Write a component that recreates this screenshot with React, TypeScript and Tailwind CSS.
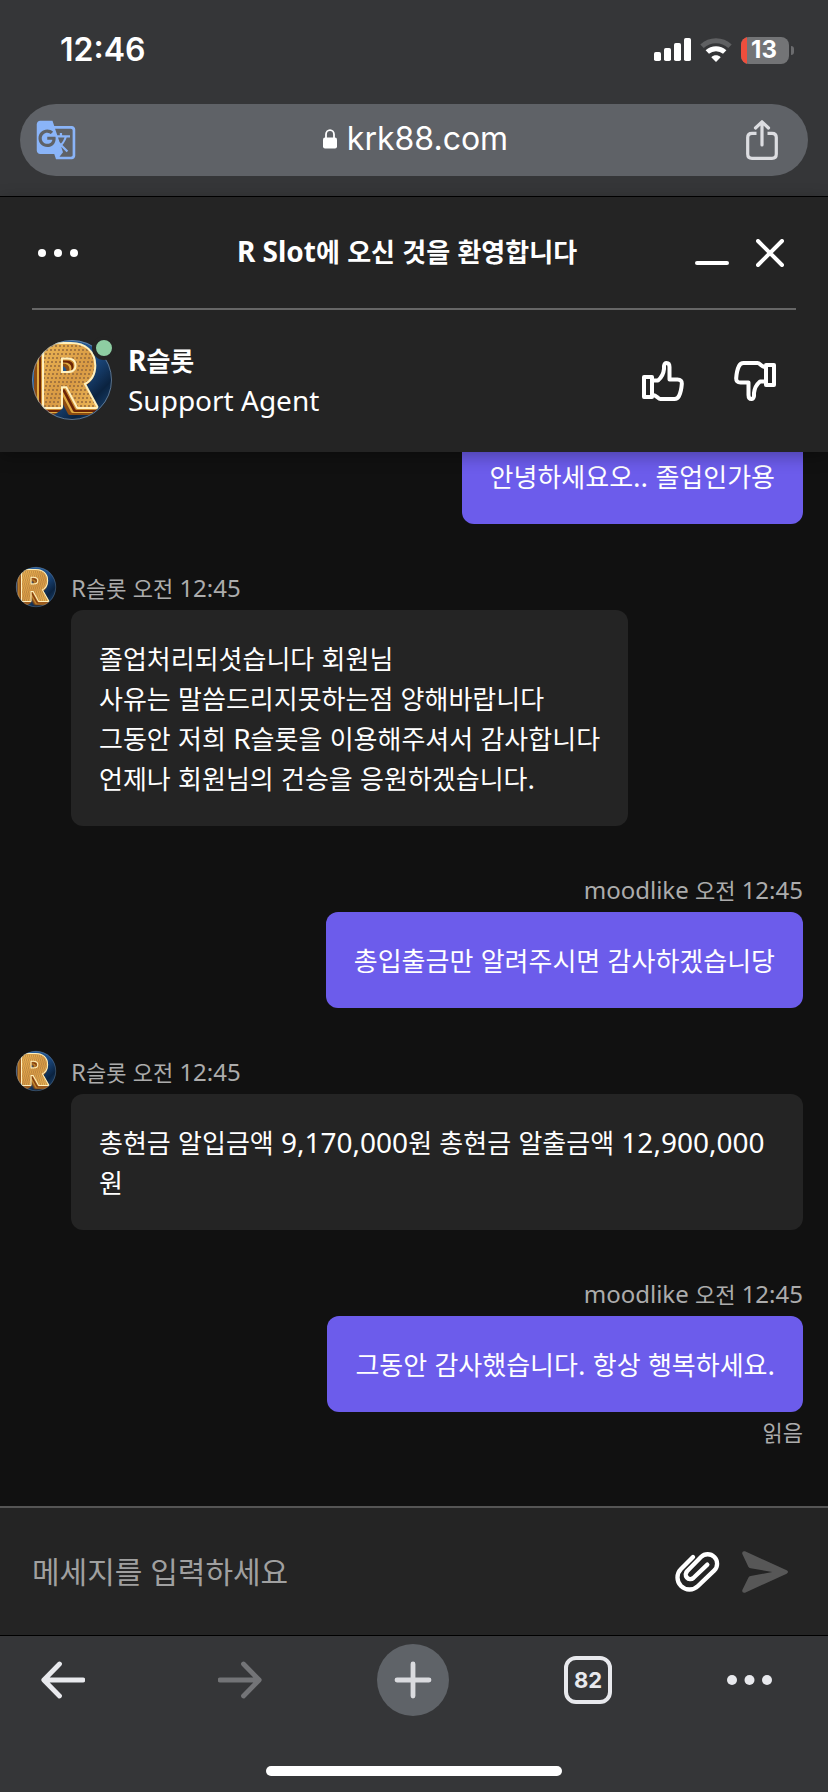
import { useId } from "react";
import type { ReactNode } from "react";
import { MdGTranslate } from "react-icons/md";

const SANS = "font-['Noto_Sans','Noto_Sans_CJK_KR',sans-serif]";

/** Hangul runs are set slightly smaller than the Latin text and spaces around them. */
function Mixed({ text, hangul }: { text: string; hangul: string }) {
  const parts = text.split(/([가-힣]+)/);
  return (
    <>
      {parts.map((part, i) =>
        i % 2 ? (
          <span key={i} className={hangul}>
            {part}
          </span>
        ) : (
          part
        ),
      )}
    </>
  );
}

function Avatar({ className }: { className: string }) {
  const id = useId();
  const bg = `${id}-bg`;
  const face = `${id}-face`;
  const gold = `${id}-gold`;
  const clip = `${id}-clip`;
  return (
    <svg viewBox="0 0 80 80" className={`${className} overflow-visible`} aria-hidden="true">
      <defs>
        <linearGradient id={bg} x1="0" y1="0" x2="1" y2="1">
          <stop offset="0" stopColor="#2f69a8" />
          <stop offset="0.5" stopColor="#1d4d86" />
          <stop offset="0.75" stopColor="#0b2340" />
          <stop offset="1" stopColor="#1f5288" />
        </linearGradient>
        <linearGradient id={gold} x1="0" y1="0" x2="1" y2="1">
          <stop offset="0" stopColor="#f0bb58" />
          <stop offset="0.5" stopColor="#d89a44" />
          <stop offset="1" stopColor="#f5c560" />
        </linearGradient>
        <pattern id={face} width="80" height="80" patternUnits="userSpaceOnUse">
          <rect width="80" height="80" fill={`url(#${gold})`} />
          {Array.from({ length: 20 }, (_, i) => (
            <path
              key={i}
              d={`M0 ${i * 4 + 2}H80`}
              stroke="#94683a"
              strokeWidth="1.6"
              strokeDasharray="2 2"
              strokeDashoffset={i}
            />
          ))}
        </pattern>
        <clipPath id={clip}>
          <circle cx="40" cy="40" r="40" />
        </clipPath>
      </defs>
      <circle cx="40" cy="40" r="40" fill={`url(#${bg})`} />
      <g clipPath={`url(#${clip})`}>
        <text
          x="8"
          y="67"
          fill={`url(#${face})`}
          stroke="#fff0bd"
          strokeWidth="4"
          strokeLinejoin="round"
          className="font-[Inter,sans-serif] text-[86px] font-black [filter:drop-shadow(-1px_1px_0_#c98a30)_drop-shadow(-2px_2px_0_#6b2406)_drop-shadow(-2px_1px_0_#e0aa40)_drop-shadow(-3px_2px_0_#8a4a12)] [paint-order:stroke]"
        >
          R
        </text>
      </g>
      <circle cx="40" cy="40" r="39.5" fill="none" stroke="#8fa3b5" strokeOpacity="0.6" />
    </svg>
  );
}

function ThumbIcon({ down = false }: { down?: boolean }) {
  return (
    <svg
      viewBox="0 0 42 40"
      className={down ? "h-10 w-[42px] rotate-180" : "h-10 w-[42px]"}
      fill="none"
      stroke="currentColor"
      strokeWidth="4"
      strokeLinejoin="round"
    >
      <rect x="2" y="16" width="8" height="20" />
      <path d="M11 19.5H16C19.5 16.5 21.5 13 22 8V5C22.3 3 23 2 24.5 2C26.5 2 27.5 3.5 27.5 6V18.5H35.5C38.5 18.5 40 20 39.8 23C39.5 27 38.5 32 37 35C36 37 34.5 38 32.5 38H18.5C16 38 14.5 34 11 34" />
    </svg>
  );
}

function Meta({ text }: { text: string }) {
  return (
    <p className="h-11 text-2xl leading-[44px] text-[#acacac]">
      <Mixed text={text} hangul="text-[22px] leading-none" />
    </p>
  );
}

function Line({ text }: { text: string }) {
  return (
    <p>
      <Mixed text={text} hangul="text-[26px] leading-none" />
    </p>
  );
}

function AgentMessage({ meta, children }: { meta: string; children: ReactNode }) {
  return (
    <article className="grid grid-cols-[55px_minmax(0,1fr)]">
      <div className="pt-px">
        <Avatar className="size-10" />
      </div>
      <div className="flex flex-col items-start">
        <Meta text={meta} />
        <div className="rounded-xl bg-[#242424] p-7 text-[28px] leading-10 break-all">{children}</div>
      </div>
    </article>
  );
}

function VisitorMessage({ meta, text, status }: { meta?: string; text: string; status?: string }) {
  return (
    <article className="flex flex-col items-end">
      {meta && <Meta text={meta} />}
      <div className="rounded-xl bg-[#6c5ceb] p-7 text-[28px] leading-10">
        <Line text={text} />
      </div>
      {status && <p className="text-[22px] leading-10 text-[#acacac]">{status}</p>}
    </article>
  );
}

function Dots({ r, gap }: { r: number; gap: number }) {
  const w = 2 * (gap + r);
  return (
    <svg viewBox={`0 0 ${w} ${2 * r}`} width={w} height={2 * r} fill="currentColor">
      <circle cx={r} cy={r} r={r} />
      <circle cx={r + gap} cy={r} r={r} />
      <circle cx={r + 2 * gap} cy={r} r={r} />
    </svg>
  );
}

function StatusBar() {
  return (
    <div className="flex h-[104px] items-center justify-between pr-[34px] pb-1 pl-[60px]">
      <time className="text-[32px] font-semibold text-white">12:46</time>
      <div className="flex items-center gap-[9px]">
        <svg viewBox="0 0 37 24" className="h-6 w-[37px]" fill="#fff">
          <rect x="0" y="14" width="7" height="9" rx="1.8" />
          <rect x="10" y="10" width="7" height="13" rx="1.8" />
          <rect x="20" y="5" width="7" height="18" rx="1.8" />
          <rect x="30" y="0" width="7" height="23" rx="1.8" />
        </svg>
        <svg viewBox="0 0 32 24" className="h-6 w-8" fill="none">
          <path d="M2 8.3C10 0.8 22 0.8 30 8.3" stroke="#5f6062" strokeWidth="5" />
          <path d="M7.3 14C12.3 9.5 19.7 9.5 24.7 14" stroke="#fff" strokeWidth="5" />
          <path d="M16 24L11.3 19.2C14 16.7 18 16.7 20.7 19.2Z" fill="#fff" />
        </svg>
        <div className="flex items-center gap-0.5">
          <div className="flex h-[27px] w-12 items-center overflow-hidden rounded-lg bg-[#737476]">
            <span className="h-full w-1.5 bg-[#ee4e3c]" />
            <span className="w-[34px] text-center text-2xl leading-none font-bold text-white">13</span>
          </div>
          <span className="h-[9px] w-[3px] rounded-r-full bg-[#6b6c6e]" />
        </div>
      </div>
    </div>
  );
}

function AddressBar() {
  return (
    <div className="mx-5 mb-5 grid h-[72px] grid-cols-[1fr_auto_1fr] items-center rounded-full bg-[#5f6267] pr-[30px] pl-[15px]">
      <button type="button" aria-label="Translate" className="justify-self-start text-[#8ab4f8]">
        <MdGTranslate className="size-[42px]" />
      </button>
      <a
        href="https://krk88.com"
        className="ml-[18px] flex items-center gap-2.5 pb-0.5 text-[32px] leading-none text-white"
      >
        <svg viewBox="0 0 14 20" className="h-5 w-3.5">
          <path d="M3 9V5.5A4 4.3 0 0 1 11 5.5V9" fill="none" stroke="#fff" strokeWidth="1.8" />
          <rect x="0" y="8.5" width="14" height="11" rx="2" fill="#fff" />
        </svg>
        krk88.com
      </a>
      <button type="button" aria-label="Share" className="justify-self-end text-[#dcdde1]">
        <svg
          viewBox="0 0 32 40"
          className="h-10 w-8"
          fill="none"
          stroke="currentColor"
          strokeWidth="3.2"
          strokeLinejoin="round"
        >
          <path d="M10.5 13.3H6Q1.7 13.3 1.7 17.5V34Q1.7 38.3 6 38.3H26Q30.3 38.3 30.3 34V17.5Q30.3 13.3 26 13.3H21.5" />
          <path d="M16 25V2M9.5 8L16 1.8L22.5 8" strokeLinecap="round" />
        </svg>
      </button>
    </div>
  );
}

function ChatHeader() {
  return (
    <header className="relative z-10 bg-[#242424] px-8 text-white shadow-[0_4px_16px_rgba(0,0,0,0.3)]">
      <div className="grid h-[113px] grid-cols-[96px_1fr_110px] items-center border-b-2 border-[#666666]">
        <button type="button" aria-label="메뉴" className="flex h-12 w-[60px] items-center pl-1.5">
          <Dots r={4} gap={16} />
        </button>
        <h1 className="pb-1 text-center text-[28px] leading-10 font-bold whitespace-nowrap">
          <Mixed text="R Slot에 오신 것을 환영합니다" hangul="text-[26px] leading-none" />
        </h1>
        <div className="flex items-center justify-end gap-[27px] pr-3">
          <button type="button" aria-label="최소화" className="flex h-7 w-[34px] items-end pb-0.5">
            <span className="h-1 w-full rounded-full bg-white" />
          </button>
          <button type="button" aria-label="닫기">
            <svg viewBox="0 0 28 28" className="size-7" stroke="#fff" strokeWidth="4" strokeLinecap="round">
              <path d="M2 2L26 26M26 2L2 26" />
            </svg>
          </button>
        </div>
      </div>
      <div className="flex items-center pt-[30px] pb-8">
        <div className="relative size-20">
          <Avatar className="size-20" />
          <span className="absolute -top-1 -right-1 size-6 rounded-full border-4 border-[#242424] bg-[#8ecda2]" />
        </div>
        <div className="ml-4 flex-1 text-[28px] leading-10">
          <p className="font-bold">
            <Mixed text="R슬롯" hangul="text-[26px] leading-none" />
          </p>
          <p>Support Agent</p>
        </div>
        <div className="flex gap-[50px] pt-0.5 pr-5">
          <button type="button" aria-label="좋아요">
            <ThumbIcon />
          </button>
          <button type="button" aria-label="싫어요">
            <ThumbIcon down />
          </button>
        </div>
      </div>
    </header>
  );
}

function Composer() {
  return (
    <form
      className="flex h-[129px] items-center border-t-2 border-[#555555] bg-[#242424] pr-10 pl-8"
      onSubmit={(e) => e.preventDefault()}
    >
      <input
        type="text"
        aria-label="메세지를 입력하세요"
        placeholder="메세지를 입력하세요"
        className="h-16 min-w-0 flex-1 bg-transparent text-[30px] text-white outline-none placeholder:text-[#a0a0a0]"
      />
      <button type="button" aria-label="파일 첨부" className="text-white">
        <svg
          viewBox="0 0 138 120"
          className="h-10 w-[46px]"
          fill="none"
          stroke="currentColor"
          strokeWidth="13"
          strokeLinecap="round"
        >
          <path d="M57 15L21 51A36 36 0 0 0 72 102L121 55A28 28 0 0 0 81 15L40 57A13 13 0 0 0 58 78L100 38" />
        </svg>
      </button>
      <button type="submit" aria-label="보내기" className="ml-[22px] text-[#575757]">
        <svg viewBox="0 0 138 126" className="h-[42px] w-[46px]" fill="currentColor">
          <path d="M9 1L134 58Q142 63 134 68L9 125Q-1 127 1 117L19 80Q21 76 26 75L91 63L26 52Q21 51 19 47L1 9Q-1 -1 9 1Z" />
        </svg>
      </button>
    </form>
  );
}

function BottomBar() {
  return (
    <nav className="border-t border-black bg-[#353638] font-[Inter,sans-serif]">
      <div className="flex h-[88px] items-center justify-between pr-14 pl-[41px] text-[#e8e9ed]">
        <button type="button" aria-label="Back" className="w-[62px]">
          <svg
            viewBox="0 0 44 38"
            className="h-[38px] w-11"
            fill="none"
            stroke="currentColor"
            strokeWidth="4.8"
            strokeLinecap="round"
            strokeLinejoin="round"
          >
            <path d="M42 19H3M18.5 3L2.8 19L18.5 35" />
          </svg>
        </button>
        <button type="button" aria-label="Forward" className="text-[#737477]" disabled>
          <svg
            viewBox="0 0 44 38"
            className="h-[38px] w-11"
            fill="none"
            stroke="currentColor"
            strokeWidth="4.8"
            strokeLinecap="round"
            strokeLinejoin="round"
          >
            <path d="M2 19H41M25.5 3L41.2 19L25.5 35" />
          </svg>
        </button>
        <button
          type="button"
          aria-label="New tab"
          className="flex size-[72px] items-center justify-center rounded-full bg-[#5f6368] text-[#dadbdf]"
        >
          <svg
            viewBox="0 0 38 38"
            className="size-[38px]"
            stroke="currentColor"
            strokeWidth="4.8"
            strokeLinecap="round"
          >
            <path d="M3 19H35M19 3V35" />
          </svg>
        </button>
        <button
          type="button"
          aria-label="Tabs"
          className="flex size-12 items-center justify-center rounded-xl border-4 border-current text-[22px] leading-none font-bold"
        >
          82
        </button>
        <button type="button" aria-label="More">
          <Dots r={5} gap={17.5} />
        </button>
      </div>
      <div className="flex justify-center pt-[42px] pb-4">
        <span className="h-2.5 w-[296px] rounded-full bg-white" />
      </div>
    </nav>
  );
}

export default function App() {
  return (
    <div className="flex h-screen flex-col bg-[#111111]">
      <div className="border-b border-black bg-[#353638] font-[Inter,sans-serif]">
        <StatusBar />
        <AddressBar />
      </div>
      <section className={`flex min-h-0 flex-1 flex-col ${SANS}`}>
        <ChatHeader />
        <main className="flex min-h-0 flex-1 flex-col justify-end overflow-hidden bg-[#111111] text-white">
          <div className="flex flex-col gap-[42px] pr-[25px] pb-[54px] pl-4">
            <VisitorMessage text="안녕하세요오.. 졸업인가용" />
            <AgentMessage meta="R슬롯 오전 12:45">
              <Line text="졸업처리되셧습니다 회원님" />
              <Line text="사유는 말씀드리지못하는점 양해바랍니다" />
              <Line text="그동안 저희 R슬롯을 이용해주셔서 감사합니다" />
              <Line text="언제나 회원님의 건승을 응원하겠습니다." />
            </AgentMessage>
            <VisitorMessage meta="moodlike 오전 12:45" text="총입출금만 알려주시면 감사하겠습니당" />
            <AgentMessage meta="R슬롯 오전 12:45">
              <Line text="총현금 알입금액 9,170,000원 총현금 알출금액 12,900,000원" />
            </AgentMessage>
            <VisitorMessage
              meta="moodlike 오전 12:45"
              text="그동안 감사했습니다. 항상 행복하세요."
              status="읽음"
            />
          </div>
        </main>
        <Composer />
      </section>
      <BottomBar />
    </div>
  );
}
